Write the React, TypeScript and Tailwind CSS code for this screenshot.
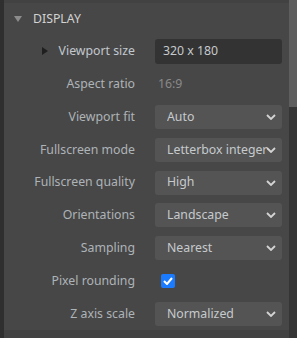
const font = { fontFamily: '"Noto Sans", "Open Sans", sans-serif' };

const Chevron = () => (
  <svg width="10" height="6" viewBox="0 0 10 6" className="absolute right-[6px] top-1/2 -translate-y-1/2">
    <path d="M1 1 L5 5 L9 1" fill="none" stroke="#d4d4d4" strokeWidth="1.8" />
  </svg>
);

const Select = ({ value }: { value: string }) => (
  <div className="relative w-[127px] h-[24px] rounded-[3px] bg-[#545454] flex items-center pl-[12px] pr-[12px]">
    <span className="flex-1 overflow-hidden whitespace-nowrap text-[#c6cacd]">{value}</span>
    <Chevron />
  </div>
);

const Row = ({ label, children, arrow }: { label: string; children: React.ReactNode; arrow?: boolean }) => (
  <div className="h-[32.8px] flex items-center">
    <div className="w-[131px] flex items-center justify-end relative">
      {arrow && (
        <svg width="6" height="8" viewBox="0 0 6 8" className="absolute left-[38px] top-1/2 -translate-y-1/2">
          <path d="M0 0 L6 4 L0 8 Z" fill="#1f1f1f" />
        </svg>
      )}
      <span className={arrow ? "text-[#c2c8ce]" : "text-[#aeb3b8]"}>{label}</span>
    </div>
    <div className="ml-[20px]">{children}</div>
  </div>
);

export default function App() {
  return (
    <div className="w-[297px] h-[338px] flex bg-[#474747] text-[12.3px] overflow-hidden" style={font}>
      <div className="w-[4px] bg-[#2f2f2f]" />
      <div className="flex-1 flex flex-col">
        <div className="h-[3px] bg-[#424242]" />
        <div className="h-[32px] flex items-center">
          <svg width="8" height="6" viewBox="0 0 8 6" className="ml-[10px]">
            <path d="M0 0 L8 0 L4 6 Z" fill="#8c8c8c" />
          </svg>
          <span className="ml-[11px] text-[#d2d2d2]">DISPLAY</span>
        </div>
        <Row label="Viewport size" arrow>
          <div className="w-[127px] h-[25px] rounded-[3px] bg-[#333333] flex items-center pl-[8px] text-[#c6cacd]">320 x 180</div>
        </Row>
        <Row label="Aspect ratio">
          <span className="ml-[3px] text-[#8a8a8a]">16:9</span>
        </Row>
        <Row label="Viewport fit"><Select value="Auto" /></Row>
        <Row label="Fullscreen mode"><Select value="Letterbox integer" /></Row>
        <Row label="Fullscreen quality"><Select value="High" /></Row>
        <Row label="Orientations"><Select value="Landscape" /></Row>
        <Row label="Sampling"><Select value="Nearest" /></Row>
        <Row label="Pixel rounding">
          <div className="ml-[6px] w-[14px] h-[14px] rounded-[2px] bg-[#1a7bff] flex items-center justify-center">
            <svg width="10" height="8" viewBox="0 0 10 8">
              <path d="M1 4 L4 7 L9 1" fill="none" stroke="#ffffff" strokeWidth="2" />
            </svg>
          </div>
        </Row>
        <Row label="Z axis scale"><Select value="Normalized" /></Row>
        <div className="flex-1 bg-[#424242]" />
      </div>
      <div className="w-[8px] flex flex-col bg-[#353535]">
        <div className="h-[107px] bg-[#5e5e5e]" />
      </div>
    </div>
  );
}
